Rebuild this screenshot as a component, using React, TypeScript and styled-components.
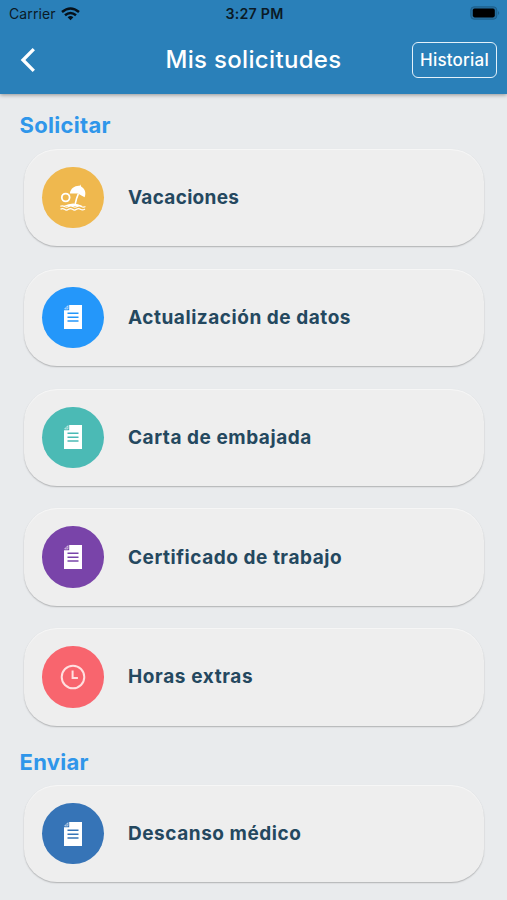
import React from "react";
import styled, { createGlobalStyle } from "styled-components";

const GlobalStyle = createGlobalStyle`
  * { box-sizing: border-box; }
  body { margin: 0; background: #e9ebed; font-family: Inter, "Liberation Sans", sans-serif; }
`;

const Screen = styled.div`
  height: 900px;
  overflow: hidden;
  background: #e9ebed;
`;

const Header = styled.header`
  height: 94px;
  background: #2a80b9;
  box-shadow: 0 1px 4px rgba(0, 0, 0, 0.38);
`;

const StatusBar = styled.div`
  height: 27px;
  display: grid;
  grid-template-columns: 1fr auto 1fr;
  align-items: center;
  padding: 0 7px 0 9px;
  color: #0a1a26;
  font-size: 14px;
  line-height: 26px;
`;

const Carrier = styled.div`
  display: flex;
  align-items: center;
  gap: 5px;
  letter-spacing: 0.1px;
`;

const Clock = styled.div`
  font-size: 14.2px;
  font-weight: 600;
  letter-spacing: 0.25px;
`;

const BatterySlot = styled.div`
  display: flex;
  justify-content: flex-end;
  padding-bottom: 1px;
`;

const NavBar = styled.div`
  height: 65px;
  display: grid;
  grid-template-columns: 1fr auto 1fr;
  align-items: center;
  padding: 0 10px 0 19px;
`;

const BackButton = styled.button`
  display: flex;
  width: 18px;
  padding: 0;
  border: 0;
  background: none;
`;

const Title = styled.h1`
  margin: 1px 9px 0 0;
  color: #fff;
  font-size: 24px;
  font-weight: 500;
  line-height: 30px;
  letter-spacing: 0.33px;
`;

const HistoryButton = styled.button`
  justify-self: end;
  width: 85px;
  height: 36px;
  padding: 0;
  border: 1.5px solid #e4f1fa;
  border-radius: 6px;
  background: none;
  color: #fff;
  font: 500 17px/32px Inter, "Liberation Sans", sans-serif;
  letter-spacing: 0.2px;
  white-space: nowrap;
`;

const SectionTitle = styled.h2`
  height: 55px;
  margin: 0;
  padding: 16px 0 0 19.5px;
  color: #2f96ea;
  font-size: 22px;
  font-weight: 700;
  line-height: 30px;
  letter-spacing: 0.3px;
`;

const Section = styled.section`
  & + & ${SectionTitle} {
    height: 38.3px;
    padding-top: 0;
  }
`;

const CardList = styled.div`
  display: flex;
  flex-direction: column;
  gap: 22.4px;
  padding: 0 23px 21.2px 24px;
`;

const Card = styled.article`
  height: 97.4px;
  display: flex;
  align-items: center;
  gap: 24.5px;
  padding-left: 18px;
  border-radius: 33px;
  background: #eeeeee;
  box-shadow: 0 1px 1.5px rgba(0, 0, 0, 0.25), inset 0 1px 1px rgba(255, 255, 255, 0.55);
`;

const IconCircle = styled.div<{ $color: string }>`
  width: 61.5px;
  height: 61.5px;
  display: flex;
  align-items: center;
  justify-content: center;
  border-radius: 50%;
  background: ${(p) => p.$color};
`;

const CardLabel = styled.span<{ $tracking: number }>`
  padding-top: 1px;
  color: #24485f;
  font-size: 19px;
  font-weight: 700;
  line-height: 26px;
  letter-spacing: ${(p) => p.$tracking}px;
  white-space: nowrap;
`;

const WifiIcon = () => (
  <svg width="19" height="14" viewBox="0 0 19 14" fill="none" stroke="#06111a" strokeWidth="2.5">
    <path d="M1 5Q9.5-2 18 5" />
    <path d="M4 8.3Q9.5 3.6 15 8.3" />
    <path d="M9.5 13.3 6.6 10.2Q9.5 7.9 12.4 10.2Z" fill="#06111a" stroke="none" />
  </svg>
);

const BatteryIcon = () => (
  <svg width="31" height="14" viewBox="0 0 31 14">
    <rect x="1.8" y=".8" width="26" height="12.4" rx="3.3" fill="#276f9f" stroke="#1d608c" />
    <rect x="3.8" y="2.6" width="22" height="8.8" rx="1.8" fill="#000" />
    <path d="M29.2 5q2 2 0 4z" fill="#1d5c86" />
  </svg>
);

const BackIcon = () => (
  <svg width="18" height="26" viewBox="0 0 18 26" fill="none" stroke="#fff" strokeWidth="3.3">
    <path d="M14.8 2.2 4 13l10.8 10.8" />
  </svg>
);

const DocumentIcon = ({ color }: { color: string }) => (
  <svg width="20" height="26" viewBox="0 0 20 26">
    <path d="M6.2 1H19v24H1V6.2h5.2z" fill="#fff" />
    <path d="M1.7 4.9 4.9 1.7v3.2z" fill={color} stroke="#fff" strokeOpacity=".7" strokeWidth=".9" />
    <path d="M4.5 9.3h11M4.5 13.2h11M4.5 17.1h11" stroke={color} strokeWidth="1.5" />
  </svg>
);

const BeachIcon = () => (
  <svg width="28" height="28" viewBox="0 0 28 28" fill="none" stroke="#fff">
    <circle cx="6.7" cy="13.5" r="3.9" strokeWidth="1.8" />
    <path d="M10.8 9.5C11.6 4.3 16.2 1.5 20.4 1.9L21.3.6l.8 1.8C26 4.6 27.4 8.9 25.6 13.2L18.8 9.6z" fill="#fff" stroke="none" />
    <path d="M19.3 9.8Q17.4 14 16.2 20" strokeWidth="1.6" />
    <path d="M4.5 22Q14.5 16.8 23.5 22z" fill="#fff" stroke="none" />
    <path d="M1.3 22.3q2.1-1 4.2.2t4.2 0 4.2 0 4.2 0 4.2 0 4.1 0M1.5 25.3q2-1.5 4 0t4 0 4 0 4 0 4 0 4.5-.3" strokeWidth="1.2" />
  </svg>
);

const ClockIcon = () => (
  <svg width="26" height="26" viewBox="0 0 26 26" fill="none" stroke="#ffe0e0">
    <circle cx="13" cy="13" r="11.3" strokeWidth="2" />
    <path d="M12.6 6.5v7.6h5.3" strokeWidth="2" />
  </svg>
);

type Kind = "beach" | "document" | "clock";
type Request = { label: string; color: string; kind: Kind; tracking?: number };

const requests: Request[] = [
  { label: "Vacaciones", color: "#efb84e", kind: "beach", tracking: 0.3 },
  { label: "Actualización de datos", color: "#2497fa", kind: "document" },
  { label: "Carta de embajada", color: "#4bbab5", kind: "document" },
  { label: "Certificado de trabajo", color: "#7944a9", kind: "document" },
  { label: "Horas extras", color: "#f8656e", kind: "clock", tracking: 0.62 },
];

const submissions: Request[] = [
  { label: "Descanso médico", color: "#3674b7", kind: "document" },
];

const RequestIcon = ({ kind, color }: { kind: Kind; color: string }) => {
  if (kind === "beach") return <BeachIcon />;
  if (kind === "clock") return <ClockIcon />;
  return <DocumentIcon color={color} />;
};

const RequestSection = ({ title, items }: { title: string; items: Request[] }) => (
  <Section>
    <SectionTitle>{title}</SectionTitle>
    <CardList>
      {items.map((item) => (
        <Card key={item.label}>
          <IconCircle $color={item.color}>
            <RequestIcon kind={item.kind} color={item.color} />
          </IconCircle>
          <CardLabel $tracking={item.tracking ?? 0.54}>{item.label}</CardLabel>
        </Card>
      ))}
    </CardList>
  </Section>
);

export default function App() {
  return (
    <Screen>
      <GlobalStyle />
      <Header>
        <StatusBar>
          <Carrier>
            Carrier
            <WifiIcon />
          </Carrier>
          <Clock>3:27 PM</Clock>
          <BatterySlot>
            <BatteryIcon />
          </BatterySlot>
        </StatusBar>
        <NavBar>
          <BackButton aria-label="Volver">
            <BackIcon />
          </BackButton>
          <Title>Mis solicitudes</Title>
          <HistoryButton>Historial</HistoryButton>
        </NavBar>
      </Header>
      <RequestSection title="Solicitar" items={requests} />
      <RequestSection title="Enviar" items={submissions} />
    </Screen>
  );
}
